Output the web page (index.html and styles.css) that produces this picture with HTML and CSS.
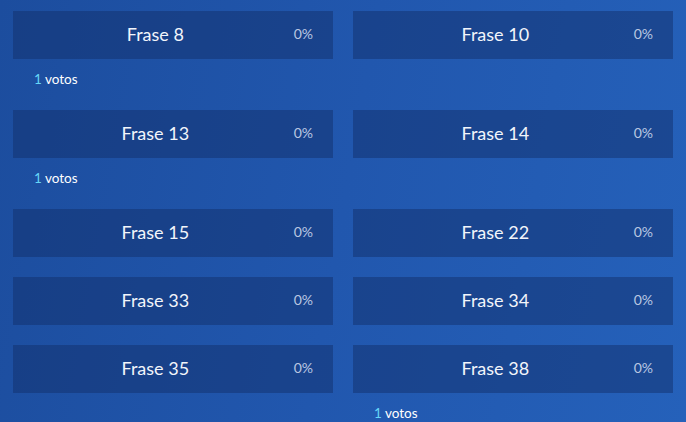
FILE: index.html
```html
<!DOCTYPE html>
<html>
<head>
<meta charset="utf-8">
<link rel="stylesheet" href="styles.css">
</head>
<body>
<div class="grid">
  <div class="item"><div class="box"><span class="title">Frase 8</span><span class="pct">0%</span></div><div class="votes"><span class="num">1</span> votos</div></div>
  <div class="item"><div class="box"><span class="title">Frase 10</span><span class="pct">0%</span></div></div>
  <div class="item"><div class="box"><span class="title">Frase 13</span><span class="pct">0%</span></div><div class="votes"><span class="num">1</span> votos</div></div>
  <div class="item"><div class="box"><span class="title">Frase 14</span><span class="pct">0%</span></div></div>
  <div class="item"><div class="box"><span class="title">Frase 15</span><span class="pct">0%</span></div></div>
  <div class="item"><div class="box"><span class="title">Frase 22</span><span class="pct">0%</span></div></div>
  <div class="item"><div class="box"><span class="title">Frase 33</span><span class="pct">0%</span></div></div>
  <div class="item"><div class="box"><span class="title">Frase 34</span><span class="pct">0%</span></div></div>
  <div class="item"><div class="box"><span class="title">Frase 35</span><span class="pct">0%</span></div></div>
  <div class="item"><div class="box"><span class="title">Frase 38</span><span class="pct">0%</span></div><div class="votes"><span class="num">1</span> votos</div></div>
</div>
</body>
</html>
```
FILE: styles.css
```css
html, body {
  margin: 0;
  padding: 0;
  height: 100%;
  overflow: hidden;
}
body {
  background: linear-gradient(100deg, #1c4d9e 0%, #2157ae 50%, #2561ba 100%);
  font-family: Lato, "Noto Sans", sans-serif;
  color: #ffffff;
}
.grid {
  display: grid;
  grid-template-columns: 320px 320px;
  column-gap: 20px;
  row-gap: 20px;
  padding: 11px 13px 0 13px;
  align-items: start;
}
.item {
  display: flex;
  flex-direction: column;
}
.box {
  height: 48px;
  box-sizing: border-box;
  padding-bottom: 2px;
  display: flex;
  align-items: center;
  background: rgba(18, 48, 108, 0.5);
}
.title {
  flex: 1;
  padding-left: 4px;
  text-align: center;
  font-size: 18px;
  color: #f2f5fb;
}
.pct {
  margin-right: 20px;
  margin-bottom: 2px;
  font-size: 14px;
  color: #b9c7e2;
}
.votes {
  padding: 10px 0 0 21px;
  height: 21px;
  line-height: 21px;
  font-size: 13.5px;
  color: #ffffff;
}
.num {
  color: #66d6f7;
}
```
